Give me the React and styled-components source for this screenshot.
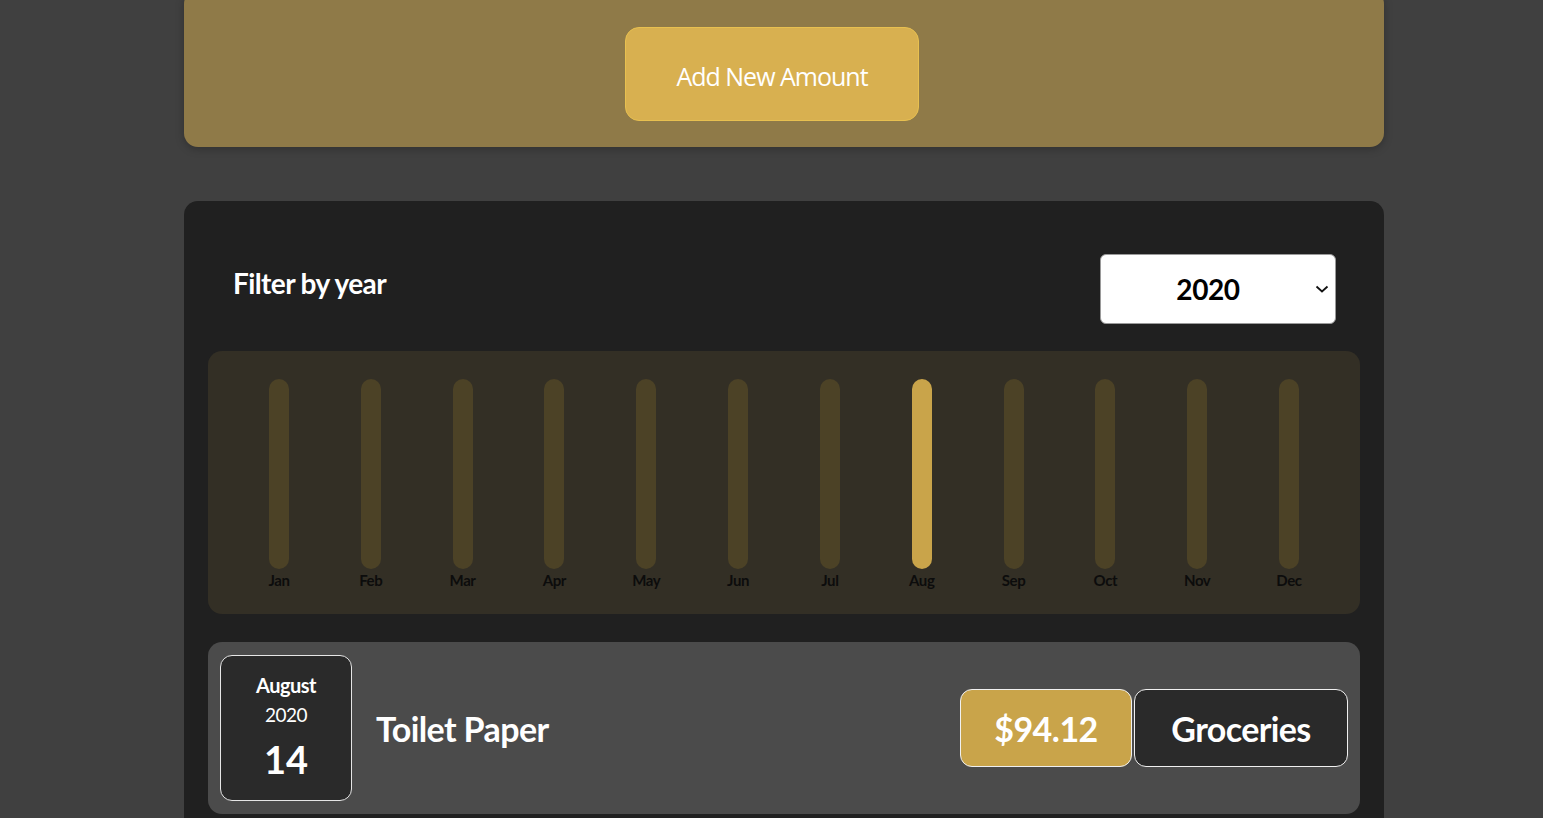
import styled, { createGlobalStyle } from "styled-components";

const GlobalStyle = createGlobalStyle`
  * {
    box-sizing: border-box;
  }

  body {
    margin: 0;
    background: #404040;
    font-family: "Source Sans Pro", Lato, "Noto Sans", sans-serif;
    overflow: hidden;
  }
`;

const MONTHS = [
  "Jan",
  "Feb",
  "Mar",
  "Apr",
  "May",
  "Jun",
  "Jul",
  "Aug",
  "Sep",
  "Oct",
  "Nov",
  "Dec",
];

const expenses = [
  {
    id: "e1",
    title: "Toilet Paper",
    amount: 94.12,
    category: "Groceries",
    date: new Date(2020, 7, 14),
  },
];

export default function App() {
  const activeMonth = 7;

  return (
    <>
      <GlobalStyle />
      <Page>
        <NewExpense>
          <AddButton type="button">Add New Amount</AddButton>
        </NewExpense>

        <Expenses>
          <FilterRow>
            <FilterLabel>Filter by year</FilterLabel>
            <YearSelect>
              <span>2020</span>
              <Chevron viewBox="0 0 14 8" aria-hidden="true">
                <path d="M1.5 1.5 7 6.5l5.5-5" />
              </Chevron>
            </YearSelect>
          </FilterRow>

          <Chart>
            {MONTHS.map((m, i) => (
              <ChartColumn key={m}>
                <BarTrack $active={i === activeMonth} />
                <BarLabel>{m}</BarLabel>
              </ChartColumn>
            ))}
          </Chart>

          <ExpenseList>
            {expenses.map((e) => (
              <ExpenseItem key={e.id}>
                <DateBox>
                  <DateMonth>
                    {e.date.toLocaleString("en-US", { month: "long" })}
                  </DateMonth>
                  <DateYear>{e.date.getFullYear()}</DateYear>
                  <DateDay>{e.date.getDate()}</DateDay>
                </DateBox>
                <ExpenseTitle>{e.title}</ExpenseTitle>
                <Price>${e.amount.toFixed(2)}</Price>
                <Category>{e.category}</Category>
              </ExpenseItem>
            ))}
          </ExpenseList>
        </Expenses>
      </Page>
    </>
  );
}

const Page = styled.div`
  width: 1200px;
  margin: -10px 0 0 184px;

  display: flex;
  flex-direction: column;
  gap: 54px;
`;

const NewExpense = styled.div`
  background: #8f7a48;
  border-radius: 14px;
  box-shadow: 0 2px 8px rgba(0, 0, 0, 0.25);

  padding: 37px 24px 26px 0;

  display: flex;
  justify-content: center;
`;

const AddButton = styled.button`
  font-family: "Open Sans", sans-serif;
  font-size: 25px;
  letter-spacing: -1px;
  color: #fff;

  width: 294px;
  height: 94px;

  padding: 4px 0 0 0;

  background: #d8b050;
  border: 1px solid #e8c050;
  border-radius: 14px;

  cursor: pointer;
`;

const Expenses = styled.div`
  background: #202020;
  border-radius: 14px;

  padding: 53px 24px 24px 24px;

  display: flex;
  flex-direction: column;
`;

const FilterRow = styled.div`
  padding: 0 24px 0 25px;

  display: flex;
  align-items: center;
  justify-content: space-between;
`;

const FilterLabel = styled.div`
  font-size: 28px;
  font-weight: 700;
  letter-spacing: -0.6px;
  color: #fff;

  margin-top: -12px;
`;

const YearSelect = styled.div`
  position: relative;

  width: 236px;
  height: 70px;

  background: #fff;
  border: 1px solid #9a9a9a;
  border-radius: 6px;

  display: grid;
  place-items: center;

  font-size: 28px;
  font-weight: 700;
  letter-spacing: -0.4px;
  color: #000;

  span {
    margin-left: -20px;
  }
`;

const Chevron = styled.svg`
  position: absolute;
  right: 6px;
  top: 30px;

  width: 14px;
  height: 8px;

  fill: none;
  stroke: #111;
  stroke-width: 1.8;
`;

const Chart = styled.div`
  margin-top: 27px;

  height: 263px;

  background: #332f25;
  border-radius: 14px;

  padding: 28px 25px 0 25px;

  display: flex;
`;

const ChartColumn = styled.div`
  flex: 1;

  display: flex;
  flex-direction: column;
  align-items: center;
  gap: 2px;
`;

const BarTrack = styled.div`
  width: 20px;
  height: 190px;

  background: ${(p) => (p.$active ? "#c9a44a" : "#4c4226")};
  border-radius: 10px;
`;

const BarLabel = styled.div`
  font-size: 15px;
  font-weight: 700;
  letter-spacing: -0.4px;
  color: #0c0c0c;
`;

const ExpenseList = styled.div`
  margin-top: 28px;

  display: flex;
  flex-direction: column;
  gap: 16px;
`;

const ExpenseItem = styled.div`
  height: 172px;

  background: #4b4b4b;
  border-radius: 14px;

  padding: 13px 12px 13px 12px;

  display: flex;
  align-items: center;
`;

const DateBox = styled.div`
  width: 132px;
  height: 146px;

  background: #2a2a2a;
  border: 1px solid #e6e6e6;
  border-radius: 12px;

  padding-top: 17px;

  color: #fff;

  display: flex;
  flex-direction: column;
  align-items: center;
`;

const DateMonth = styled.div`
  font-size: 20px;
  font-weight: 700;
  line-height: 25px;
  letter-spacing: -0.5px;
`;

const DateYear = styled.div`
  font-size: 19px;
  line-height: 24px;
  letter-spacing: -0.5px;

  margin-top: 5px;
`;

const DateDay = styled.div`
  font-size: 38px;
  font-weight: 700;
  line-height: 1;

  margin-top: 13px;
`;

const ExpenseTitle = styled.h2`
  flex: 1;

  font-size: 34px;
  font-weight: 700;
  letter-spacing: -0.6px;
  color: #fff;

  margin: 0 0 0 24px;
`;

const Price = styled.div`
  width: 172px;
  height: 78px;

  background: #c9a44a;
  border: 1px solid #f0f0f0;
  border-radius: 12px;

  display: grid;
  place-items: center;

  font-size: 34px;
  font-weight: 700;
  letter-spacing: -0.5px;
  color: #fff;
`;

const Category = styled.div`
  width: 214px;
  height: 78px;

  margin-left: 2px;

  background: #2a2a2a;
  border: 1px solid #f0f0f0;
  border-radius: 12px;

  display: grid;
  place-items: center;

  font-size: 34px;
  font-weight: 700;
  letter-spacing: -0.6px;
  color: #fff;
`;
